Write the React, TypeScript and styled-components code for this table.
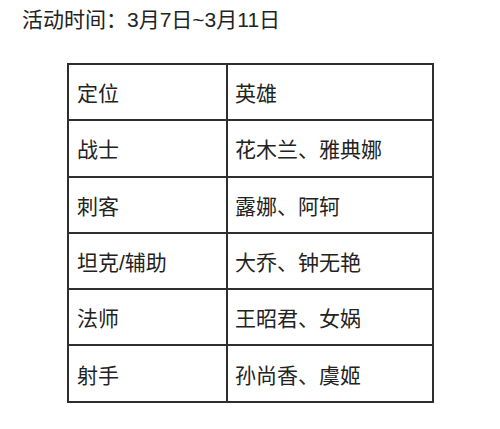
import React from "react";
import styled, { createGlobalStyle } from "styled-components";

const Global = createGlobalStyle`
  html, body { margin: 0; padding: 0; background: #ffffff; }
  body { font-family: "Liberation Sans", "Noto Sans CJK SC", sans-serif; color: #222; }
`;

const Page = styled.div`
  width: 500px;
  height: 429px;
  background: #fff;
  padding: 7px 0 0 22px;
  box-sizing: border-box;
`;

const Title = styled.div`
  font-size: 21px;
  line-height: 25px;
  color: #222;
`;

const Table = styled.table`
  margin: 31px 0 0 45px;
  border-collapse: collapse;
  width: 367px;
`;

const Cell = styled.td<{ $first?: boolean }>`
  border: 2px solid #2e2e2e;
  height: 54.3px;
  padding: 0 0 0 ${(p) => (p.$first ? 8 : 7)}px;
  font-size: 21px;
  color: #222;
  vertical-align: middle;
  width: ${(p) => (p.$first ? "149px" : "auto")};
`;

const rows: [string, string][] = [
  ["定位", "英雄"],
  ["战士", "花木兰、雅典娜"],
  ["刺客", "露娜、阿轲"],
  ["坦克/辅助", "大乔、钟无艳"],
  ["法师", "王昭君、女娲"],
  ["射手", "孙尚香、虞姬"],
];

export default function App() {
  return (
    <Page>
      <Global />
      <Title>活动时间：3月7日~3月11日</Title>
      <Table>
        <tbody>
          {rows.map(([a, b]) => (
            <tr key={a}>
              <Cell $first>{a}</Cell>
              <Cell>{b}</Cell>
            </tr>
          ))}
        </tbody>
      </Table>
    </Page>
  );
}
